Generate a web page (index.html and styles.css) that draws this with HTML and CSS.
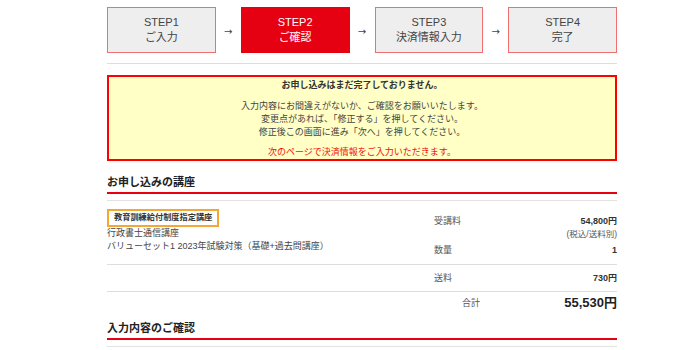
FILE: index.html
```html
<!DOCTYPE html>
<html lang="ja">
<head>
<meta charset="utf-8">
<title>ご確認</title>
<link rel="stylesheet" href="styles.css">
</head>
<body>
<div class="page">
  <div class="steps">
    <div class="step"><span>STEP1</span><span>ご入力</span></div>
    <div class="arrow">→</div>
    <div class="step step-active"><span>STEP2</span><span>ご確認</span></div>
    <div class="arrow">→</div>
    <div class="step"><span>STEP3</span><span>決済情報入力</span></div>
    <div class="arrow">→</div>
    <div class="step"><span>STEP4</span><span>完了</span></div>
  </div>
  <div class="divider"></div>

  <div class="notice">
    <p class="notice-title">お申し込みはまだ完了しておりません。</p>
    <p class="notice-p1">入力内容にお間違えがないか、ご確認をお願いいたします。</p>
    <p class="notice-p2">変更点があれば、「修正する」を押してください。<br>修正後この画面に進み「次へ」を押してください。</p>
    <p class="notice-red">次のページで決済情報をご入力いただきます。</p>
  </div>

  <h2 class="section-title">お申し込みの講座</h2>
  <div class="course">
    <div class="course-info">
      <div class="badge">教育訓練給付制度指定講座</div>
      <div class="course-name">行政書士通信講座</div>
      <div class="course-name">バリューセット1 2023年試験対策（基礎+過去問講座）</div>
    </div>
    <div class="course-price">
      <div class="price-row"><span class="label">受講料</span><span class="value">54,800円</span></div>
      <div class="price-note">(税込/送料別)</div>
      <div class="price-row qty"><span class="label">数量</span><span class="value">1</span></div>
    </div>
  </div>
  <div class="ship">
    <div></div>
    <div class="price-row"><span class="label">送料</span><span class="value">730円</span></div>
  </div>
  <div class="total">
    <div></div>
    <div class="total-row"><span class="label">合計</span><span class="total-value">55,530円</span></div>
  </div>

  <h2 class="section-title section-title-2">入力内容のご確認</h2>
  <div class="after-line"></div>
</div>
</body>
</html>
```

FILE: styles.css
```css
* { box-sizing: border-box; }
body {
  margin: 0;
  background: #ffffff;
  font-family: "Liberation Sans", "Noto Sans CJK JP", sans-serif;
  color: #333333;
  font-size: 9px;
}
.page {
  width: 510px;
  margin-left: 107px;
  padding-top: 7px;
}
.steps {
  display: flex;
  align-items: center;
}
.step {
  flex: 1;
  height: 46px;
  border: 1px solid #ef6f6f;
  background: #eeeeee;
  color: #444444;
  font-size: 11px;
  line-height: 15px;
  display: flex;
  flex-direction: column;
  align-items: center;
  justify-content: center;
}
.step-active {
  background: #e50012;
  border-color: #e50012;
  color: #ffffff;
}
.arrow {
  width: 25px;
  text-align: center;
  color: #444444;
  font-family: "DejaVu Sans", sans-serif;
  font-size: 10px;
  padding-top: 2px;
}
.divider {
  height: 1px;
  background: #dddddd;
  margin-top: 10px;
}
.notice {
  margin-top: 11px;
  border: 2px solid #ff0000;
  background: #ffffc6;
  text-align: center;
  padding: 2px 0 0;
  color: #444444;
}
.notice p { margin: 0; line-height: 13px; }
.notice-title { font-weight: bold; color: #333333; }
.notice-p1 { margin-top: 8px !important; }
.notice-red { margin-top: 7px !important; color: #f01010; }
.section-title {
  margin: 13px 0 0;
  font-size: 11px;
  font-weight: bold;
  line-height: 16px;
  padding-bottom: 2px;
  border-bottom: 2px solid #e50012;
  color: #222222;
}
.section-title-2 { margin-top: 8px; }
.course {
  margin-top: 6px;
  border-top: 1px solid #e3e3e3;
  border-bottom: 1px solid #dddddd;
  display: grid;
  grid-template-columns: 1fr 183px;
}
.course-info { padding-top: 8px; color: #444444; }
.badge {
  display: inline-block;
  border: 2px solid #f5a733;
  padding: 0 5px;
  font-size: 8.2px;
  font-weight: bold;
  line-height: 14px;
  color: #333333;
}
.course-name { line-height: 13px; }
.course-price { padding: 14px 0 7px; }
.price-row {
  display: flex;
  justify-content: space-between;
  line-height: 13px;
}
.label { color: #555555; }
.value { font-weight: bold; color: #333333; }
.price-note {
  text-align: right;
  font-size: 8.5px;
  line-height: 12px;
  color: #555555;
}
.qty { margin-top: 4px; }
.ship {
  display: grid;
  grid-template-columns: 1fr 183px;
  padding: 7px 0 6px;
  border-bottom: 1px solid #dddddd;
}
.total {
  display: grid;
  grid-template-columns: 1fr 183px;
  padding-top: 2px;
}
.total-row {
  display: flex;
  justify-content: space-between;
  align-items: center;
  padding-left: 28px;
  line-height: 18px;
}
.total-value {
  font-size: 13px;
  font-weight: bold;
  color: #222222;
}
.after-line {
  margin-top: 6px;
  border-top: 1px solid #e3e3e3;
}
```
